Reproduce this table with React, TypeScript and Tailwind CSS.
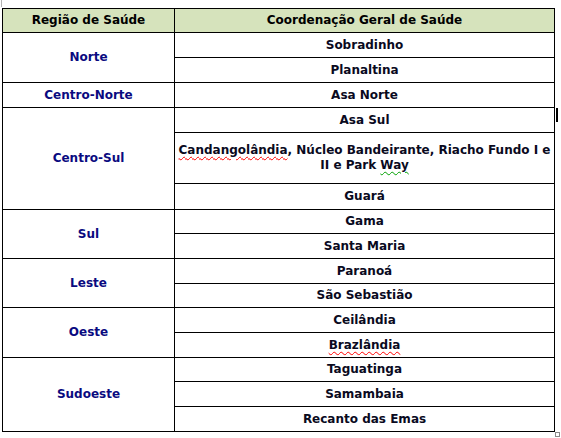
import React from 'react';

// ── Data ──────────────────────────────────────────────────────────
type Region = { name: string; units: React.ReactNode[] };

const squiggleRed = 'underline decoration-wavy decoration-[#ff0000] decoration-1 underline-offset-[2px]';
const squiggleGreen = 'underline decoration-wavy decoration-[#00a000] decoration-1 underline-offset-[2px]';

const regions: Region[] = [
  { name: 'Norte', units: ['Sobradinho', 'Planaltina'] },
  { name: 'Centro-Norte', units: ['Asa Norte'] },
  {
    name: 'Centro-Sul',
    units: [
      'Asa Sul',
      <>
        <span className={squiggleRed}>Candangolândia</span>, Núcleo Bandeirante, Riacho Fundo I e
        <br />
        II e Park <span className={squiggleGreen}>Way</span>
      </>,
      'Guará',
    ],
  },
  { name: 'Sul', units: ['Gama', 'Santa Maria'] },
  { name: 'Leste', units: ['Paranoá', 'São Sebastião'] },
  { name: 'Oeste', units: ['Ceilândia', <span className={squiggleRed}>Brazlândia</span>] },
  { name: 'Sudoeste', units: ['Taguatinga', 'Samambaia', 'Recanto das Emas'] },
];

const font = { fontFamily: '"DejaVu Sans", Tahoma, sans-serif' };

export default function App() {
  let row = 2; // grid row 1 is the header
  return (
    <div className="relative w-[561px] h-[438px] bg-white overflow-hidden" style={font}>
      {/* page margin marker */}
      <div className="absolute left-px top-0 w-px h-[7px] bg-[#b4b4b4]" />

      <div className="absolute left-[2px] top-[8px]">
        <div
          className="grid grid-cols-[171px_379px] gap-px p-px bg-black text-[12px] font-bold leading-[15px]
            grid-rows-[23px_24px_24px_24px_24px_50px_25px_23px_24px_24px_23px_24px_24px_23px_24px_24px]"
        >
          <div className="bg-[#d6e3bc] flex items-center justify-center text-black">Região de Saúde</div>
          <div className="bg-[#d6e3bc] flex items-center justify-center text-black">Coordenação Geral de Saúde</div>

          {regions.map(r => {
            const start = row;
            row += r.units.length;
            return (
              <React.Fragment key={r.name}>
                <div
                  className="bg-white flex items-center justify-center text-[#0a0a80] col-start-1"
                  style={{ gridRow: `${start} / span ${r.units.length}` }}
                >
                  {r.name}
                </div>
                {r.units.map((u, i) => (
                  <div
                    key={i}
                    className="bg-white flex items-center justify-center text-center text-[#0a0a1e] col-start-2 whitespace-nowrap"
                    style={{ gridRow: `${start + i}` }}
                  >
                    <span>{u}</span>
                  </div>
                ))}
              </React.Fragment>
            );
          })}
        </div>
      </div>

      {/* text cursor bar at right edge */}
      <div className="absolute left-[556px] top-[108px] w-[2px] h-[14px] bg-black" />
      {/* table resize handle */}
      <div className="absolute left-[555px] top-[432px] w-[5px] h-[5px] border border-[#8a8a8a] bg-white" />
    </div>
  );
}
